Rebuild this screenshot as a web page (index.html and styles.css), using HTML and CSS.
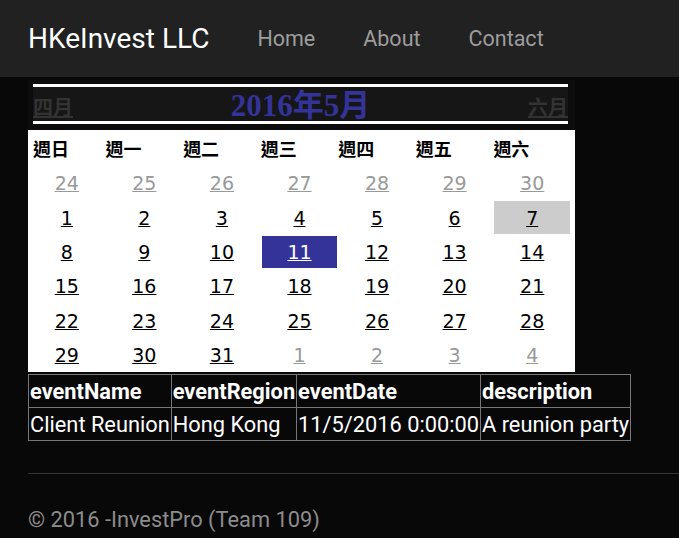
FILE: index.html
```html
<!DOCTYPE html>
<html lang="zh-Hant">
<head>
<meta charset="utf-8">
<title>HKeInvest LLC</title>
<link rel="stylesheet" href="styles.css">
</head>
<body>
<nav class="navbar">
  <a class="brand" href="#">HKeInvest LLC</a>
  <ul class="nav">
    <li><a href="#">Home</a></li>
    <li><a href="#">About</a></li>
    <li><a href="#">Contact</a></li>
  </ul>
</nav>
<main class="container">
  <div class="calendar">
    <div class="cal-title-wrap">
      <div class="cal-title">
        <a class="cal-prev" href="#">四月</a>
        <span class="cal-month">2016年5月</span>
        <a class="cal-next" href="#">六月</a>
      </div>
    </div>
    <div class="cal-body">
      <table class="cal-grid">
        <thead>
          <tr><th>週日</th><th>週一</th><th>週二</th><th>週三</th><th>週四</th><th>週五</th><th>週六</th></tr>
        </thead>
        <tbody>
          <tr><td class="other"><a href="#">24</a></td><td class="other"><a href="#">25</a></td><td class="other"><a href="#">26</a></td><td class="other"><a href="#">27</a></td><td class="other"><a href="#">28</a></td><td class="other"><a href="#">29</a></td><td class="other"><a href="#">30</a></td></tr>
          <tr><td><a href="#">1</a></td><td><a href="#">2</a></td><td><a href="#">3</a></td><td><a href="#">4</a></td><td><a href="#">5</a></td><td><a href="#">6</a></td><td class="today"><a href="#">7</a></td></tr>
          <tr><td><a href="#">8</a></td><td><a href="#">9</a></td><td><a href="#">10</a></td><td class="selected"><a href="#">11</a></td><td><a href="#">12</a></td><td><a href="#">13</a></td><td><a href="#">14</a></td></tr>
          <tr><td><a href="#">15</a></td><td><a href="#">16</a></td><td><a href="#">17</a></td><td><a href="#">18</a></td><td><a href="#">19</a></td><td><a href="#">20</a></td><td><a href="#">21</a></td></tr>
          <tr><td><a href="#">22</a></td><td><a href="#">23</a></td><td><a href="#">24</a></td><td><a href="#">25</a></td><td><a href="#">26</a></td><td><a href="#">27</a></td><td><a href="#">28</a></td></tr>
          <tr><td><a href="#">29</a></td><td><a href="#">30</a></td><td><a href="#">31</a></td><td class="other"><a href="#">1</a></td><td class="other"><a href="#">2</a></td><td class="other"><a href="#">3</a></td><td class="other"><a href="#">4</a></td></tr>
        </tbody>
      </table>
    </div>
  </div>
  <table class="events">
    <tr><th>eventName</th><th>eventRegion</th><th>eventDate</th><th>description</th></tr>
    <tr><td>Client Reunion</td><td>Hong Kong</td><td>11/5/2016 0:00:00</td><td>A reunion party</td></tr>
  </table>
  <hr class="rule">
  <footer class="footer">© 2016 -InvestPro (Team 109)</footer>
</main>
</body>
</html>
```
FILE: styles.css
```css
html, body {
  margin: 0;
  padding: 0;
}
body {
  background: #080808;
  font-family: Roboto, "Liberation Sans", sans-serif;
  color: #fff;
  width: 679px;
  overflow: hidden;
}
.navbar {
  height: 77px;
  background: #212121;
  display: flex;
  align-items: center;
  padding-left: 28px;
}
.brand {
  color: #fff;
  font-size: 28px;
  text-decoration: none;
  margin-right: 24px;
}
.nav {
  list-style: none;
  margin: 0;
  padding: 0;
  display: flex;
}
.nav a {
  display: block;
  padding: 0 24px;
  color: #9d9d9d;
  font-size: 21.5px;
  text-decoration: none;
}
.container {
  padding: 3px 0 0 28px;
  width: 700px;
}
.calendar {
  width: 547px;
}
.cal-title-wrap {
  background: #0c0c0c;
  padding: 4px 7px 6px 5px;
}
.cal-title {
  border-top: 3px solid #fff;
  border-bottom: 3px solid #fff;
  background: #161616;
  height: 34px;
  display: flex;
  align-items: center;
  justify-content: space-between;
  font-family: "Liberation Serif", "Noto Sans CJK TC", serif;
}
.cal-prev, .cal-next {
  color: #333;
  font-size: 20px;
  font-weight: bold;
  font-family: "Noto Sans CJK TC", sans-serif;
  width: 60px;
  text-decoration: underline;
  line-height: 1;
  padding-top: 6px;
}
.cal-next {
  text-align: right;
}
.cal-month {
  color: #333399;
  font-size: 31px;
  font-weight: bold;
  line-height: 1;
  padding-top: 3px;
}
.cal-body {
  background: #fff;
  padding-right: 4px;
}
.cal-grid {
  width: 543px;
  border-collapse: separate;
  border-spacing: 0;
  table-layout: fixed;
}
.cal-grid th {
  color: #000;
  font-family: "Noto Sans CJK TC", sans-serif;
  font-weight: bold;
  font-size: 18px;
  text-align: left;
  padding: 0;
  height: 36px;
  line-height: 1;
}
.cal-grid th:first-child {
  padding-left: 5px;
}
.cal-grid td {
  height: 32.4px;
  padding: 0;
  border: 1px solid #fff;
  text-align: center;
  font-family: "DejaVu Sans", Verdana, sans-serif;
  font-size: 19px;
}
.cal-grid td a {
  color: #000;
}
.cal-grid td.other a {
  color: #999;
}
.cal-grid td.today {
  background: #ccc;
}
.cal-grid td.selected {
  background: #333399;
}
.cal-grid td.selected a {
  color: #fff;
}
.events {
  border-collapse: collapse;
  margin-top: 2px;
  font-size: 21.8px;
}
.events th, .events td {
  border: 1px solid #777;
  padding: 0 1px;
  height: 32px;
  text-align: left;
  white-space: nowrap;
}
.events th {
  font-weight: bold;
}
.rule {
  border: 0;
  border-top: 1px solid #333;
  margin: 32px 0 0 0;
}
.footer {
  color: #8c8c8c;
  font-size: 21.8px;
  padding-top: 33px;
}
```
